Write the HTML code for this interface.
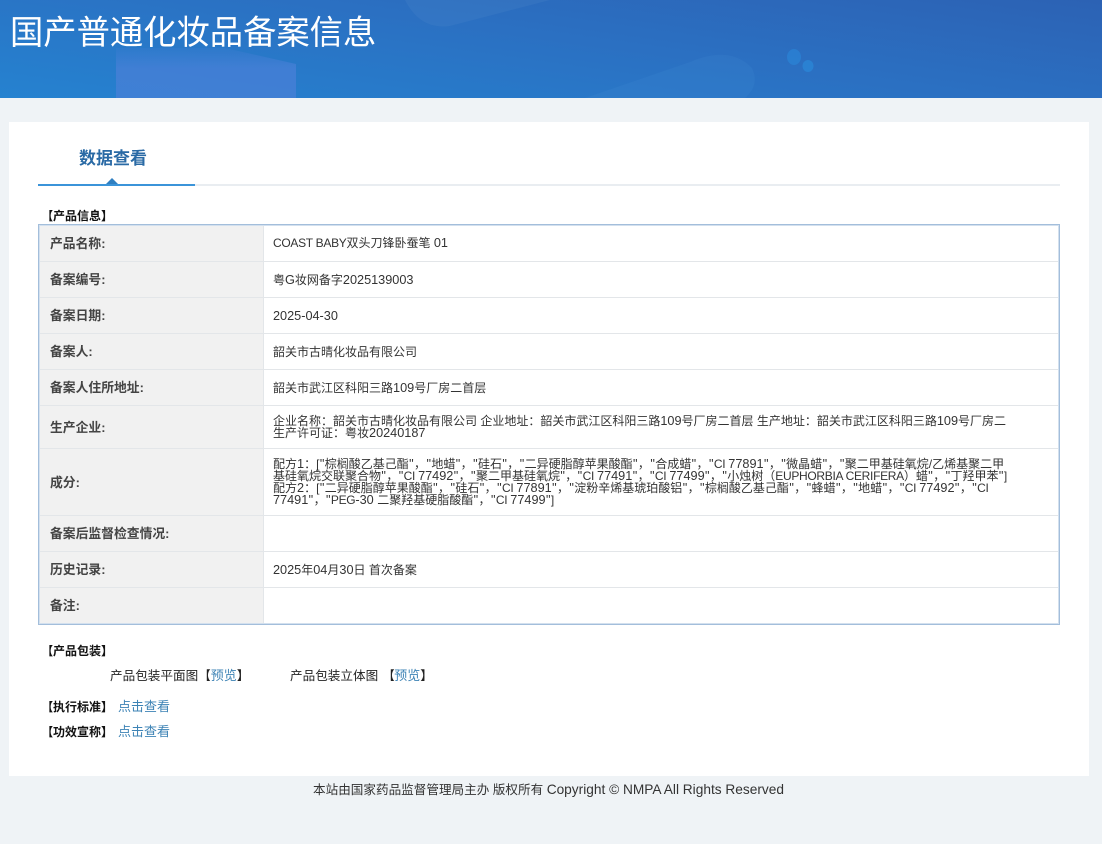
<!DOCTYPE html>
<html lang="zh"><head><meta charset="utf-8"><title>国产普通化妆品备案信息</title>
<style>
*{box-sizing:border-box;margin:0;padding:0}
html,body{width:1102px;height:844px;overflow:hidden;background:#eff3f6}
body{position:relative;font-family:"Liberation Sans","Noto Sans CJK SC",sans-serif;font-size:12px;color:#333}
.abs{position:absolute;white-space:nowrap}
#hd{position:absolute;left:0;top:0;width:1102px;height:98px;overflow:hidden;background:linear-gradient(188deg,#2c62b4 0%,#2b70c2 45%,#2582d0 100%)}
#hd h1{position:absolute;left:10px;top:11px;font-size:33.3px;line-height:46px;font-weight:400;color:#fff;white-space:nowrap}
#card{position:absolute;left:9px;top:122px;width:1080px;height:654px;background:#fff}
table{position:absolute;left:38px;top:224px;width:1022px;border-collapse:collapse;table-layout:fixed}
th,td{border-top:1px solid #e3e6e9;padding:0;vertical-align:middle;font-size:12px}
tr:first-child th,tr:first-child td{border-top:0}
th{width:225px;background:#f1f1f1;text-align:left;padding-left:12px;padding-bottom:1px;font-weight:700;color:#444;border-right:1px solid #e3e6e9;font-size:12.8px}
td{padding-left:9.5px;padding-top:1px;line-height:12px;color:#333;white-space:nowrap}
tr:first-child th{padding-bottom:0;padding-top:1px}
tr:first-child td{padding-top:2px}
tr:last-child th{padding-bottom:3px}
td i{font-style:normal;font-size:12.7px}
td em{font-style:normal;font-size:12.7px;padding:0 .4px}
td u{text-decoration:none;font-size:12px;letter-spacing:-.3px}
#frame{position:absolute;left:38px;top:224px;width:1022px;height:401px;border:1px solid #a3bedb;box-shadow:inset 0 0 0 1px #d3e0ee;pointer-events:none}
b{color:#111;font-size:12px}
s{text-decoration:none;display:inline-block}
.bl{width:12px;margin-left:-4px;transform-origin:right center;transform:scaleX(.9)}
.br{width:12px;margin-right:-4px}
.lk{width:12.6px;transform-origin:right center;transform:scaleX(.9)}
.rk{width:8px}
a{color:#3d83b5;text-decoration:none;font-size:13px}
.s{font-size:12.6px;color:#222}
</style></head><body>
<div id="hd">
<svg width="1102" height="98" style="position:absolute;left:0;top:0">
<defs><linearGradient id="g" x1="0" y1="0" x2="0" y2="1"><stop offset="0" stop-color="#4a80d8" stop-opacity=".15"/><stop offset=".4" stop-color="#4a80d8" stop-opacity=".7"/><stop offset="1" stop-color="#4a80d8" stop-opacity=".7"/></linearGradient></defs>
<path d="M116 48 L225 48 L296 64 L296 98 L116 98Z" fill="url(#g)"/>
<path d="M405 0 L550 0 L450 26 Q420 30 405 0Z" fill="#5a92cc" opacity=".18"/>
<path d="M585 98 L690 62 Q730 45 752 68 Q760 85 745 98Z" fill="#4f9ce0" opacity=".12"/>
<ellipse cx="794" cy="57" rx="7" ry="8" fill="#2a8bdc" opacity=".55"/>
<ellipse cx="808" cy="66" rx="5.5" ry="6" fill="#2a8bdc" opacity=".65"/>
</svg>
<h1>国产普通化妆品备案信息</h1>
</div>
<div id="card"></div>

<div class="abs" style="left:79px;top:147px;font-size:17px;line-height:24px;font-weight:700;color:#2a6aa5">数据查看</div>
<div class="abs" style="left:38px;top:184px;width:1022px;height:2px;background:#e9edf1"></div>
<div class="abs" style="left:38px;top:184px;width:157px;height:2px;background:#3b94d9"></div>
<div class="abs" style="left:106px;top:178px;width:0;height:0;border-left:6px solid transparent;border-right:6px solid transparent;border-bottom:6px solid #2f7fc1"></div>

<div class="abs s" style="left:45px;top:207px;line-height:18px"><b><s class="bl">【</s>产品信息<s class="br">】</s></b></div>

<table>
<colgroup><col style="width:225px"><col></colgroup>
<tr style="height:37px"><th>产品名称:</th><td><u>COAST BABY</u>双头刀锋卧蚕笔 <i>01</i></td></tr>
<tr style="height:36px"><th>备案编号:</th><td>粤<i>G</i>妆网备字<i>2025139003</i></td></tr>
<tr style="height:36px"><th>备案日期:</th><td><i>2025-04-30</i></td></tr>
<tr style="height:36px"><th>备案人:</th><td>韶关市古晴化妆品有限公司</td></tr>
<tr style="height:36px"><th>备案人住所地址:</th><td>韶关市武江区科阳三路<i>109</i>号厂房二首层</td></tr>
<tr style="height:43px"><th>生产企业:</th><td>企业名称&#xFF1A;韶关市古晴化妆品有限公司 企业地址&#xFF1A;韶关市武江区科阳三路<i>109</i>号厂房二首层 生产地址&#xFF1A;韶关市武江区科阳三路<i>109</i>号厂房二<br>生产许可证&#xFF1A;粤妆<i>20240187</i></td></tr>
<tr style="height:67px"><th>成分:</th><td>配方<i>1</i>&#xFF1A;[<em>"</em>棕榈酸乙基己酯<em>"</em>&#xFF0C;<em>"</em>地蜡<em>"</em>&#xFF0C;<em>"</em>硅石<em>"</em>&#xFF0C;<em>"</em>二异硬脂醇苹果酸酯<em>"</em>&#xFF0C;<em>"</em>合成蜡<em>"</em>&#xFF0C;<em>"</em><u>CI </u><i>77891</i><em>"</em>&#xFF0C;<em>"</em>微晶蜡<em>"</em>&#xFF0C;<em>"</em>聚二甲基硅氧烷/乙烯基聚二甲<br>基硅氧烷交联聚合物<em>"</em>&#xFF0C;<em>"</em><u>CI </u><i>77492</i><em>"</em>&#xFF0C;<em>"</em>聚二甲基硅氧烷<em>"</em>&#xFF0C;<em>"</em><u>CI </u><i>77491</i><em>"</em>&#xFF0C;<em>"</em><u>CI </u><i>77499</i><em>"</em>&#xFF0C;<em>"</em>小烛树&#xFF08;<u>EUPHORBIA CERIFERA</u>&#xFF09;蜡<em>"</em>&#xFF0C;<em>"</em>丁羟甲苯<em>"</em>]<br>配方<i>2</i>&#xFF1A;[<em>"</em>二异硬脂醇苹果酸酯<em>"</em>&#xFF0C;<em>"</em>硅石<em>"</em>&#xFF0C;<em>"</em><u>CI </u><i>77891</i><em>"</em>&#xFF0C;<em>"</em>淀粉辛烯基琥珀酸铝<em>"</em>&#xFF0C;<em>"</em>棕榈酸乙基己酯<em>"</em>&#xFF0C;<em>"</em>蜂蜡<em>"</em>&#xFF0C;<em>"</em>地蜡<em>"</em>&#xFF0C;<em>"</em><u>CI </u><i>77492</i><em>"</em>&#xFF0C;<em>"</em><u>CI</u><br><i>77491</i><em>"</em>&#xFF0C;<em>"</em><u>PEG</u><i>-30 </i>二聚羟基硬脂酸酯<em>"</em>&#xFF0C;<em>"</em><u>CI </u><i>77499</i><em>"</em>]</td></tr>
<tr style="height:36px"><th>备案后监督检查情况:</th><td></td></tr>
<tr style="height:36px"><th>历史记录:</th><td><i>2025</i>年<i>04</i>月<i>30</i>日 首次备案</td></tr>
<tr style="height:37px"><th>备注:</th><td></td></tr>
</table>
<div id="frame"></div>

<div class="abs s" style="left:45px;top:642px;line-height:18px"><b><s class="bl">【</s>产品包装<s class="br">】</s></b></div>
<div class="abs s" style="left:110px;top:667px;line-height:18px">产品包装平面图<s class="lk">【</s><a>预览</a><s class="rk">】</s></div>
<div class="abs s" style="left:290px;top:667px;line-height:18px">产品包装立体图 <s class="lk">【</s><a>预览</a><s class="rk">】</s></div>
<div class="abs s" style="left:45px;top:698px;line-height:18px"><b><s class="bl">【</s>执行标准<s class="br">】</s></b></div>
<div class="abs s" style="left:118px;top:698px;line-height:18px"><a>点击查看</a></div>
<div class="abs s" style="left:45px;top:723px;line-height:18px"><b><s class="bl">【</s>功效宣称<s class="br">】</s></b></div>
<div class="abs s" style="left:118px;top:723px;line-height:18px"><a>点击查看</a></div>

<div class="abs" style="left:313px;top:781px;font-size:12.6px;line-height:18px;color:#333">本站由国家药品监督管理局主办 版权所有 <span style="font-size:13.7px">Copyright © NMPA All Rights Reserved</span></div>
</body></html>
